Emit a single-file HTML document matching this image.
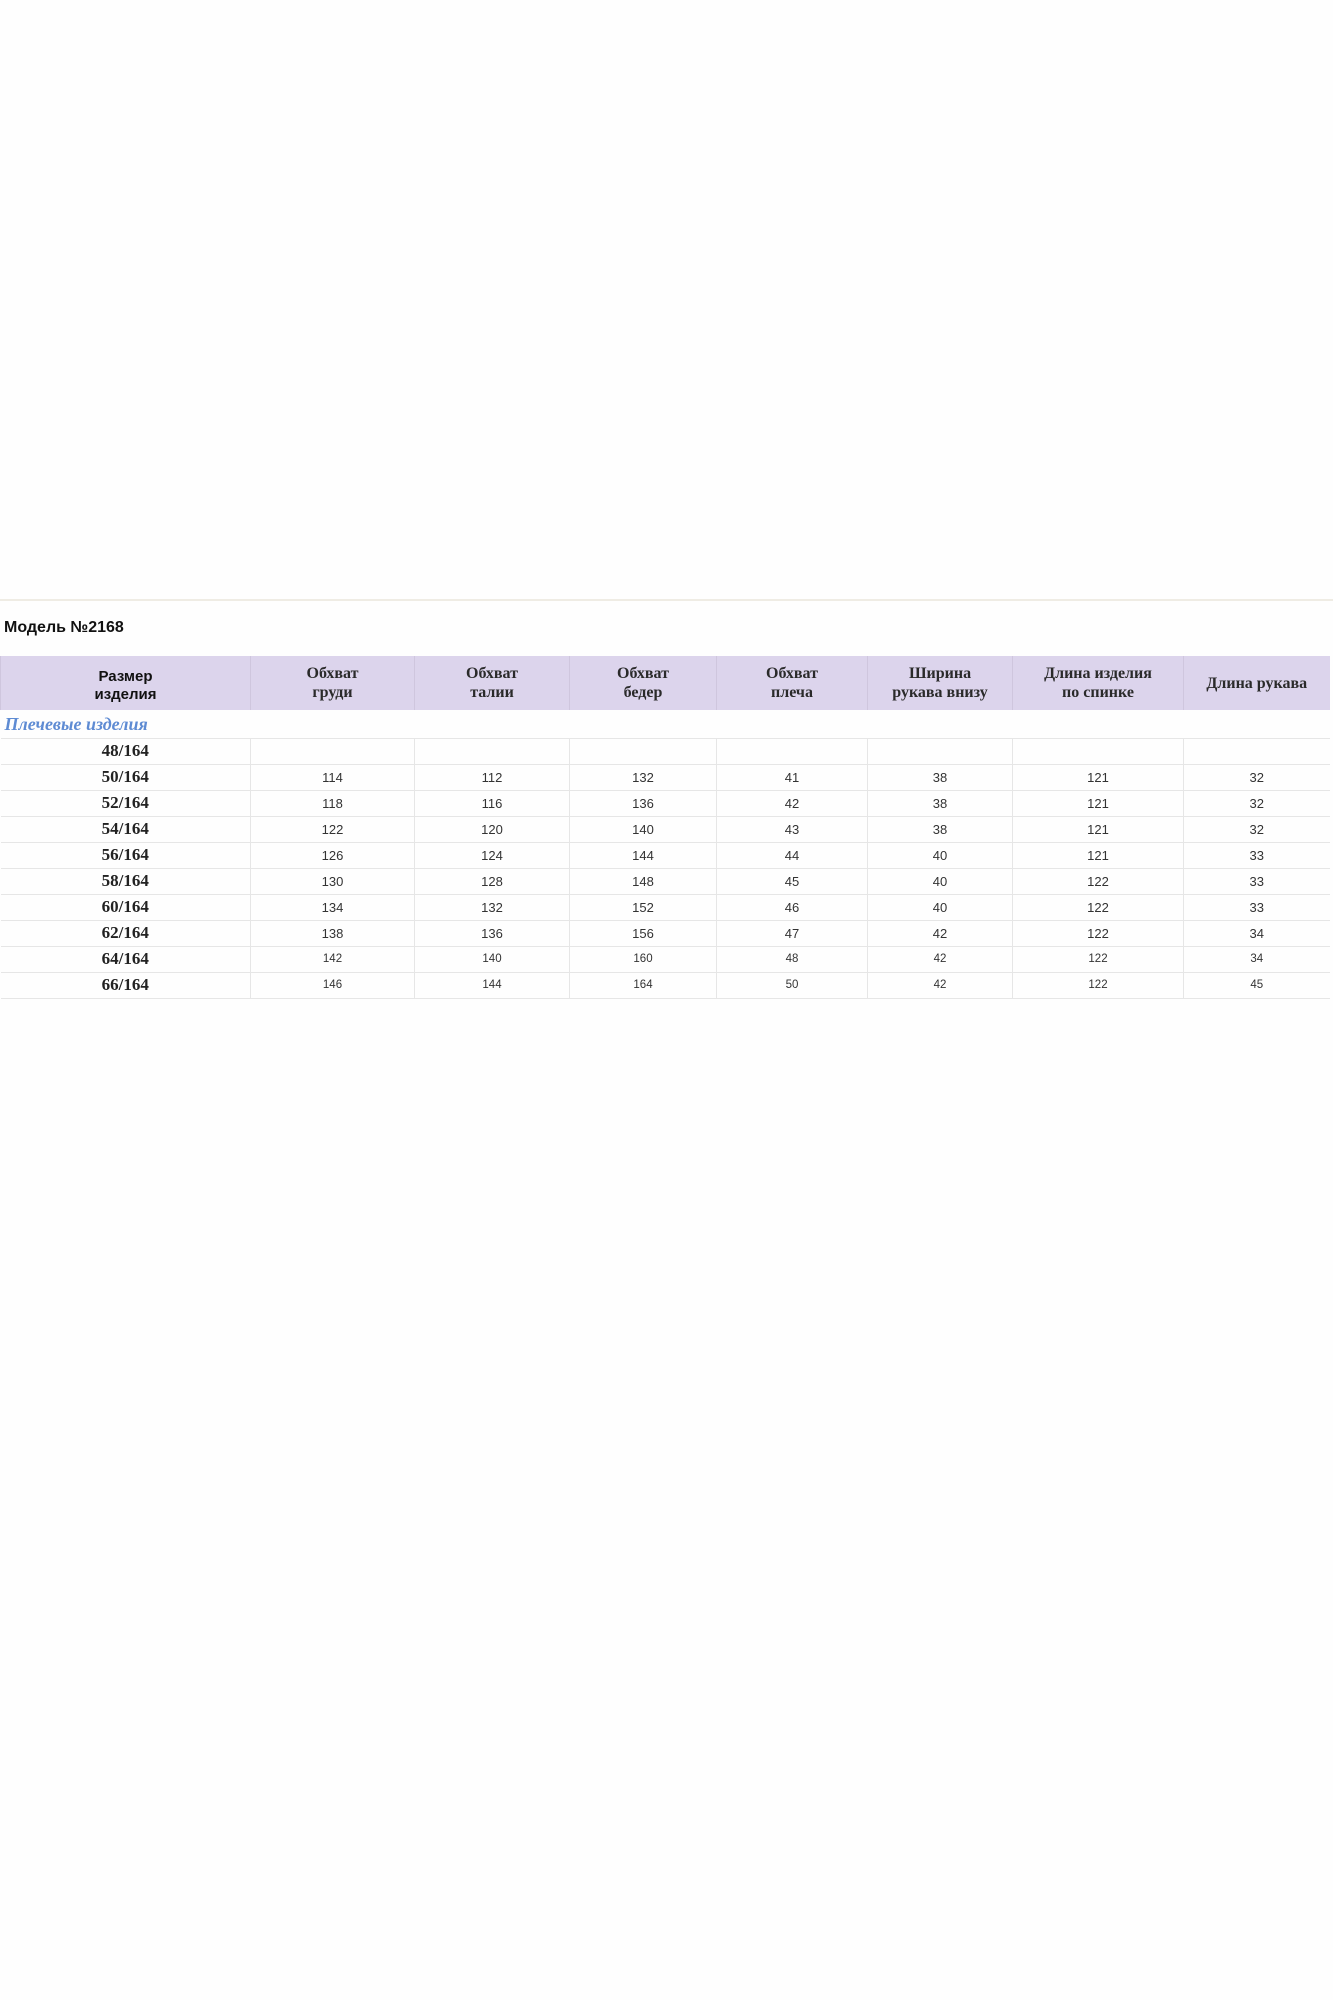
<!DOCTYPE html>
<html><head><meta charset="utf-8"><style>
html,body{margin:0;padding:0;background:#fefefe;width:1333px;height:2000px;overflow:hidden;position:relative}
.line{position:absolute;left:0;top:599px;width:1333px;height:2px;background:#efece4}
.title{position:absolute;left:4px;top:619px;font:bold 16px "Liberation Sans",sans-serif;color:#111}
table{position:absolute;left:0;top:656px;border-collapse:collapse;table-layout:fixed;width:1329px}
td{padding:0;text-align:center;border-left:1px solid #e6e6e6;border-bottom:1px solid #e6e6e6;height:26px;line-height:18px;font:13px "Liberation Sans",sans-serif;color:#333;box-sizing:border-box;overflow:hidden}
td:first-child{border-left:none}
tr.h td{background:#dcd4ec;height:54px;border-bottom:none;border-left:1px solid #cfc6de;font:bold 16px/19px "Liberation Serif",serif;color:#2a2a2a}
tr.h td:first-child{font:bold 15px/18px "Liberation Sans",sans-serif;padding-top:6px;color:#111}
tr.c td{height:28px;text-align:left;font:italic bold 18px/20px "Liberation Serif",serif;color:#5e8bd3;padding-left:4px;border-left:none}
td.s{font:bold 17px/18px "Liberation Serif",serif;color:#222}
tr.sm td{font-size:11.5px}
tr.sm td.s{font-size:17px}
</style></head><body>
<div class="line"></div>
<div class="title">Модель №2168</div>
<table>
<colgroup><col style="width:250px"><col style="width:164px"><col style="width:155px"><col style="width:147px"><col style="width:151px"><col style="width:145px"><col style="width:171px"><col style="width:146px"></colgroup>
<tr class="h"><td>Размер<br>изделия</td><td>Обхват<br>груди</td><td>Обхват<br>талии</td><td>Обхват<br>бедер</td><td>Обхват<br>плеча</td><td>Ширина<br>рукава внизу</td><td>Длина изделия<br>по спинке</td><td>Длина рукава</td></tr>
<tr class="c"><td colspan="8">Плечевые изделия</td></tr>
<tr><td class="s">48/164</td><td></td><td></td><td></td><td></td><td></td><td></td><td></td></tr>
<tr><td class="s">50/164</td><td>114</td><td>112</td><td>132</td><td>41</td><td>38</td><td>121</td><td>32</td></tr>
<tr><td class="s">52/164</td><td>118</td><td>116</td><td>136</td><td>42</td><td>38</td><td>121</td><td>32</td></tr>
<tr><td class="s">54/164</td><td>122</td><td>120</td><td>140</td><td>43</td><td>38</td><td>121</td><td>32</td></tr>
<tr><td class="s">56/164</td><td>126</td><td>124</td><td>144</td><td>44</td><td>40</td><td>121</td><td>33</td></tr>
<tr><td class="s">58/164</td><td>130</td><td>128</td><td>148</td><td>45</td><td>40</td><td>122</td><td>33</td></tr>
<tr><td class="s">60/164</td><td>134</td><td>132</td><td>152</td><td>46</td><td>40</td><td>122</td><td>33</td></tr>
<tr><td class="s">62/164</td><td>138</td><td>136</td><td>156</td><td>47</td><td>42</td><td>122</td><td>34</td></tr>
<tr class="sm"><td class="s">64/164</td><td>142</td><td>140</td><td>160</td><td>48</td><td>42</td><td>122</td><td>34</td></tr>
<tr class="sm"><td class="s">66/164</td><td>146</td><td>144</td><td>164</td><td>50</td><td>42</td><td>122</td><td>45</td></tr>
</table>
</body></html>
